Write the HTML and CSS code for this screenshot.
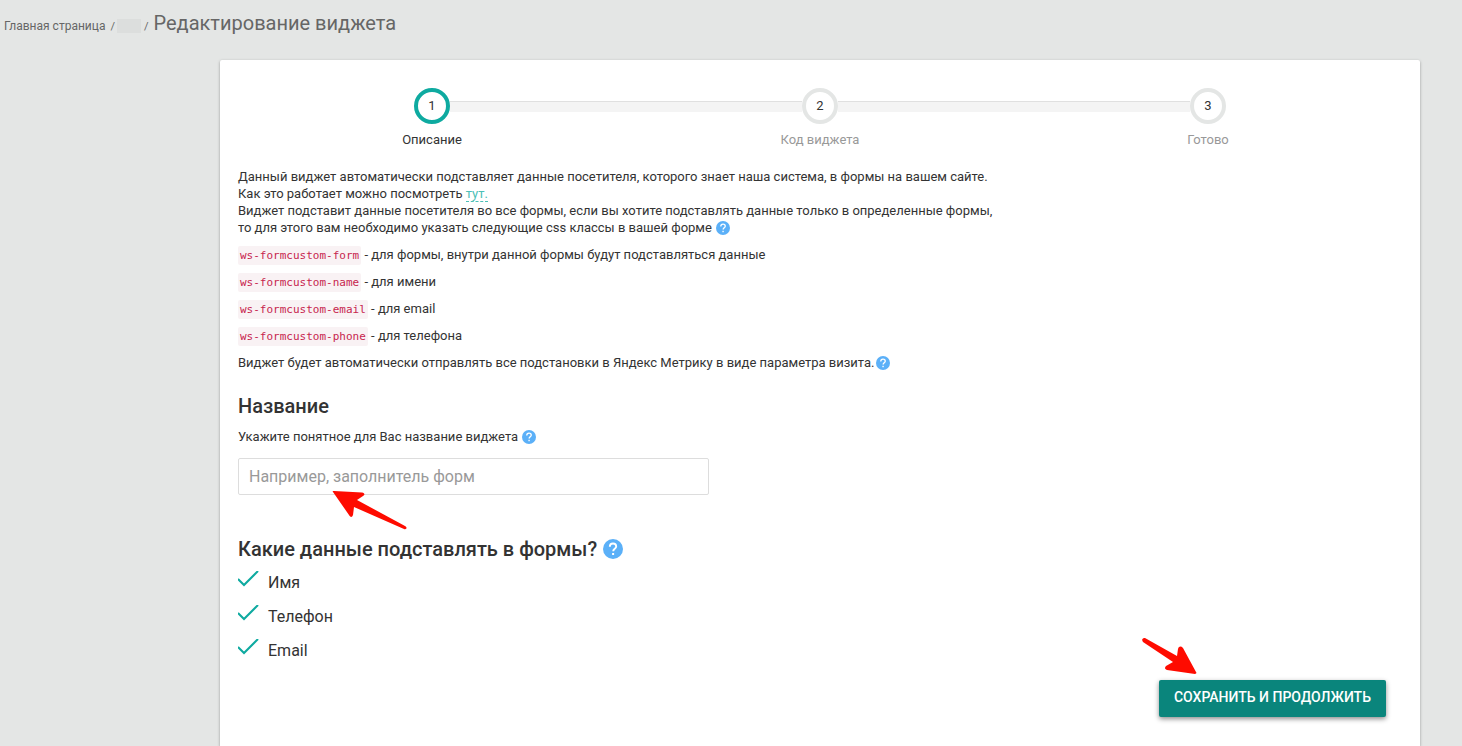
FILE: index.html
```html
<!DOCTYPE html>
<html lang="ru">
<head>
    <meta charset="UTF-8">
    <meta name="viewport" content="width=device-width, initial-scale=1">
    <title>Редактирование виджета</title>
    <link rel="stylesheet" href="styles.css">
</head>
<body>

<svg class="sprite" width="0" height="0">
    <symbol id="help" viewBox="0 0 20 20">
        <circle cx="10" cy="10" r="10" fill="#5bb0f8"/>
        <path d="M6.800 7.800C6.800 5.800 8.100 4.500 10 4.500s3.200 1.200 3.200 2.900c0 2.300-3 2.500-3 4.800" fill="none" stroke="#fff" stroke-width="1.900"/>
        <rect x="9.100" y="14" width="2" height="2" fill="#fff"/>
    </symbol>
    <symbol id="tick" viewBox="0 0 22 18">
        <path d="M0 8l6 6L20 0" fill="none" stroke="#0eaaa0" stroke-width="2"/>
    </symbol>
</svg>

<nav class="breadcrumbs">
    <a href="#">Главная страница</a>
    <span class="sep">/</span><span class="hidden-name"></span><span class="sep">/</span>
    <h1>Редактирование виджета</h1>
</nav>

<main class="card">
    <ol class="steps">
        <li class="step active"><span class="num">1</span>Описание</li>
        <li class="step"><span class="num">2</span>Код виджета</li>
        <li class="step"><span class="num">3</span>Готово</li>
    </ol>

    <form>
        <div class="description">
            <p>
                Данный виджет автоматически подставляет данные посетителя, которого знает наша система, в формы на вашем сайте.<br>
                Как это работает можно посмотреть <a href="#">тут.</a><br>
                Виджет подставит данные посетителя во все формы, если вы хотите подставлять данные только в определенные формы,<br>
                то для этого вам необходимо указать следующие css классы в вашей форме
                <svg class="help"><use href="#help"/></svg>
            </p>
            <p><code>ws-formcustom-form</code> - для формы, внутри данной формы будут подставляться данные</p>
            <p><code>ws-formcustom-name</code> - для имени</p>
            <p><code>ws-formcustom-email</code> - для email</p>
            <p><code>ws-formcustom-phone</code> - для телефона</p>
            <p>Виджет будет автоматически отправлять все подстановки в Яндекс Метрику в виде параметра визита.<svg class="help"><use href="#help"/></svg></p>
        </div>

        <h2>Название</h2>
        <label class="hint" for="name">Укажите понятное для Вас название виджета <svg class="help"><use href="#help"/></svg></label>
        <div class="field">
            <input type="text" id="name" name="name" placeholder="Например, заполнитель форм">
            <svg class="arrow arrow-field" viewBox="0 0 76 40">
                <path d="M1 1C0 0 1 0 2 0L30 1.500C33 2 33 4 31 5L25 9L73 35C76 37 74 39 72 38L22 16L21 24C20 27 18 26 17 24Z" fill="#fe0b00"/>
            </svg>
        </div>

        <h2>Какие данные подставлять в формы? <svg class="help help-big"><use href="#help"/></svg></h2>
        <div class="checks">
            <label class="check"><input type="checkbox" name="first_name" checked><svg><use href="#tick"/></svg>Имя</label>
            <label class="check"><input type="checkbox" name="phone" checked><svg><use href="#tick"/></svg>Телефон</label>
            <label class="check"><input type="checkbox" name="email" checked><svg><use href="#tick"/></svg>Email</label>
        </div>

        <div class="actions">
            <button type="submit">Сохранить и продолжить</button>
            <svg class="arrow arrow-button" viewBox="0 0 56 37">
                <path d="M3 0L35 18L36 11C37 8 39 8 41 10L54 34C55 35 54 36 53 36L25 32C22 31 23 29 24 28L31 24L1 4C-1 1 1 0 3 0Z" fill="#fe0b00"/>
            </svg>
        </div>
    </form>
</main>

</body>
</html>
```

FILE: styles.css
```css
* {
    box-sizing: border-box;
}

body {
    display: flex;
    flex-direction: column;
    min-height: 100vh;
    margin: 0;
    background: #e4e6e5;
    color: #333;
    font-family: Roboto, "Liberation Sans", sans-serif;
    font-size: 13px;
    line-height: 17px;
}

.sprite {
    position: absolute;
}

/* breadcrumbs */
.breadcrumbs {
    display: flex;
    align-items: baseline;
    gap: 5px;
    padding: 11px 4px 0;
    color: #666;
    font-size: 12px;
}

.breadcrumbs a {
    color: #666;
    text-decoration: none;
}

.breadcrumbs h1 {
    margin: 0;
    font-size: 20px;
    font-weight: 400;
    line-height: 24px;
}

.sep {
    font-size: 11px;
}

.hidden-name {
    align-self: flex-end;
    width: 24px;
    height: 14px;
    margin: 0 -2px 2px -3px;
    background: #dcdedd;
}

/* card */
.card {
    flex: 1;
    max-width: 1200px;
    margin: 25px 42px 0 220px;
    padding: 28px 18px;
    background: #fff;
    border-radius: 2px 2px 0 0;
    box-shadow: 0 1px 3px rgba(0, 0, 0, .35);
}

/* steps */
.steps {
    display: flex;
    margin: 0 0 20px;
    padding: 0;
    list-style: none;
}

.step {
    position: relative;
    display: flex;
    flex: 1;
    flex-direction: column;
    align-items: center;
    gap: 7px;
    color: #999;
}

.step + .step::before {
    content: "";
    position: absolute;
    top: 13px;
    right: calc(50% + 18px);
    width: calc(100% - 36px);
    height: 10px;
    background: #f4f4f4;
    border-top: 1px solid #e0e0e0;
}

.num {
    width: 36px;
    height: 36px;
    border: 4px solid #e4e6e5;
    border-radius: 50%;
    color: #333;
    line-height: 28px;
    text-align: center;
}

.active {
    color: #333;
}

.active .num {
    border-color: #0eaaa0;
}

/* text */
.description p {
    margin: 0 0 10px;
}

.description a {
    color: #4dbfb7;
    text-decoration: none;
    border-bottom: 1px dashed #4dbfb7;
}

code {
    padding: 3px 2px;
    background: #f9f2f4;
    border-radius: 2px;
    color: #c7254e;
    font-family: "DejaVu Sans Mono", monospace;
    font-size: 11px;
    line-height: 13px;
}

.help {
    width: 14px;
    height: 14px;
    margin-left: 1px;
    vertical-align: -3px;
}

.help-big {
    width: 20px;
    height: 20px;
}

h2 {
    margin: 0;
    font-size: 20px;
    font-weight: 500;
    line-height: 24px;
}

.description + h2 {
    margin-top: 23px;
}

.hint {
    display: block;
    margin: 10px 0 13px;
}

/* field */
.field {
    position: relative;
    max-width: 471px;
    margin-bottom: 42px;
}

.field input {
    display: block;
    width: 100%;
    height: 37px;
    padding: 0 10px;
    border: 1px solid #ddd;
    border-radius: 2px;
    color: #333;
    font: inherit;
    font-size: 16px;
}

.field input::placeholder {
    color: #999;
    opacity: 1;
}

.arrow {
    position: absolute;
    pointer-events: none;
}

.arrow-field {
    top: 33px;
    left: 94px;
    width: 76px;
    height: 40px;
}

/* checkboxes */
.checks {
    display: grid;
    justify-items: start;
    gap: 10px;
    margin-top: 10px;
}

.check {
    position: relative;
    display: flex;
    gap: 8px;
    font-size: 16px;
    line-height: 24px;
}

.check input {
    position: absolute;
    width: 22px;
    height: 18px;
    margin: 0;
    opacity: 0;
}

.check svg {
    width: 22px;
    height: 18px;
    overflow: visible;
}

.check input:not(:checked) + svg {
    visibility: hidden;
}

/* button */
.actions {
    position: relative;
    display: flex;
    justify-content: flex-end;
    margin-top: 17px;
    padding-right: 16px;
}

button {
    height: 37px;
    padding: 0 15px 2px;
    background: #0a857c;
    border: none;
    border-radius: 2px;
    box-shadow: 0 2px 5px rgba(0, 0, 0, .45);
    color: #fff;
    font: inherit;
    font-size: 14px;
    font-weight: 500;
    text-transform: uppercase;
    cursor: pointer;
}

.arrow-button {
    top: -42px;
    right: 204px;
    width: 56px;
    height: 37px;
}
```
